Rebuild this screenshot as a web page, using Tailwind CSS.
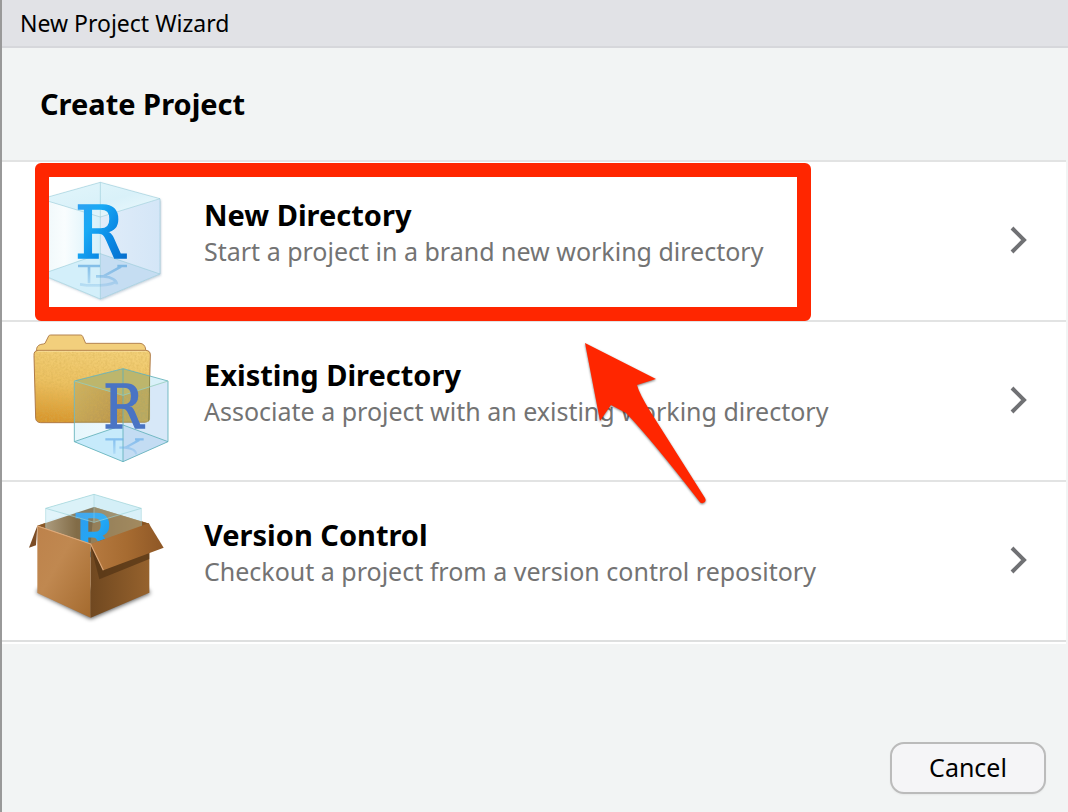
<!DOCTYPE html>
<html lang="en">
<head>
    <meta charset="UTF-8">
    <meta name="viewport" content="width=device-width, initial-scale=1.0">
    <title>New Project Wizard</title>
    <script src="https://cdn.jsdelivr.net/npm/@tailwindcss/browser@4"></script>
</head>
<body class="bg-[#f2f4f4] font-['Lucida_Grande','Noto_Sans',sans-serif] text-black">
    <div class="min-h-screen flex flex-col border-l-2 border-[#999999]">
        <!-- Title bar -->
        <header class="h-12 flex items-center px-[18px] bg-[#e1e2e6] border-b-2 border-[#d6d7db] text-[23px]">New Project Wizard</header>

        <h1 class="h-28 flex items-center px-[38px] text-[29px] font-bold">Create Project</h1>

        <!-- Project types -->
        <main class="relative mr-[2px]">
            <button class="w-full h-40 flex items-center gap-[14px] pl-[18px] pr-[38px] bg-white border-t-2 border-[#e2e3e3] text-left">
                <svg class="w-[170px] h-[150px] shrink-0" viewBox="0 33 510 450" aria-hidden="true">
                    <defs>
                        <linearGradient id="cubeLeft" x1="0" x2="1"><stop offset="0" stop-color="#eef7fa"/><stop offset=".4" stop-color="#f9fdfe"/><stop offset="1" stop-color="#d5f0fa"/></linearGradient>
                        <linearGradient id="cubeRight" x1="0" x2="1"><stop offset="0" stop-color="#e0ecf9"/><stop offset="1" stop-color="#d4e6f7"/></linearGradient>
                        <linearGradient id="cubeTop" x1="0" y1="0" x2="1" y2="1"><stop offset="0" stop-color="#e3f6fb"/><stop offset=".55" stop-color="#d9f1f9"/><stop offset="1" stop-color="#effafd"/></linearGradient>
                        <linearGradient id="letter" x1="0" y1="0" x2="1" y2="1"><stop offset="0" stop-color="#3a9cf0"/><stop offset=".35" stop-color="#19aaf5"/><stop offset=".6" stop-color="#0a8be6"/><stop offset="1" stop-color="#0564c4"/></linearGradient>
                        <linearGradient id="mirror" gradientUnits="userSpaceOnUse" x1="0" y1="330" x2="0" y2="398"><stop offset="0" stop-color="#5fa8df" stop-opacity=".7"/><stop offset="1" stop-color="#5fa8df" stop-opacity=".2"/></linearGradient>
                        <filter id="cubeShadow"><feDropShadow dx="3" dy="4" stdDeviation="3" flood-color="#557799" flood-opacity=".35"/></filter>
                    </defs>
                    <path d="M241 82 420 131V357L241 432 63 358V132Z" fill="#e4f1fa" filter="url(#cubeShadow)"/>
                    <path d="M63 132 241 186V432L63 358Z" fill="url(#cubeLeft)"/>
                    <path d="M241 186 420 131V357L241 432Z" fill="url(#cubeRight)"/>
                    <path d="M63 132 241 82 420 131 241 186Z" fill="url(#cubeTop)"/>
                    <path d="M63 358 241 296V432Z" fill="#d3effa"/>
                    <path d="M241 296 420 357 241 432Z" fill="#c5ddf2"/>
                    <path d="M63 132 241 82 420 131 241 186ZM63 132V358L241 432 420 357V131M241 186V432M63 358 241 296 420 357M241 82V186" fill="none" stroke="#8fc6d3" stroke-width="2" stroke-opacity=".8"/>
                    <!-- reflection on the cube floor -->
                    <path d="M174 333H240M292 333H321M207 335V385M303 335 250 364M228 364H250C275 366 290 376 291 388M180 388 200 391H240Q280 389 290 378" fill="none" stroke="url(#mirror)" stroke-width="8"/>
                    <text x="165" y="309" font-family="'DejaVu Serif Condensed', 'DejaVu Serif', serif" font-size="219" fill="url(#letter)" stroke="url(#letter)" stroke-width="5">R</text>
                </svg>
                <span class="flex-1">
                    <span class="block text-[29px] leading-9 font-bold">New Directory</span>
                    <span class="block text-[25px] leading-9 text-[#737373]">Start a project in a brand new working directory</span>
                    <span class="block h-4"></span>
                </span>
                <svg class="w-5 h-7 mb-[2px]" viewBox="0 0 20 28" fill="none" stroke="#707174" stroke-width="4" aria-hidden="true"><path d="M4 2 16 14 4 26"/></svg>
            </button>

            <button class="w-full h-40 flex items-center gap-[14px] pl-[18px] pr-[38px] bg-white border-t-2 border-[#e2e3e3] text-left">
                <svg class="w-[170px] h-[150px] shrink-0" viewBox="0 3 510 450" aria-hidden="true">
                    <defs>
                        <linearGradient id="folder" x1=".6" y1="0" x2=".4" y2="1"><stop offset="0" stop-color="#f3d078"/><stop offset=".5" stop-color="#ecc162"/><stop offset="1" stop-color="#d9982f"/></linearGradient>
                        <linearGradient id="glassLeft" x1="0" x2="1"><stop offset="0" stop-color="#dff4fb"/><stop offset="1" stop-color="#ecf7fd"/></linearGradient>
                        <linearGradient id="glassFolder" x1="0" x2="1" y2="1"><stop offset="0" stop-color="#cfb968"/><stop offset="1" stop-color="#b8924a"/></linearGradient>
                        <linearGradient id="mirrorSmall" gradientUnits="userSpaceOnUse" x1="0" y1="340" x2="0" y2="392"><stop offset="0" stop-color="#6cb0ea" stop-opacity=".75"/><stop offset="1" stop-color="#6cb0ea" stop-opacity=".2"/></linearGradient>
                        <filter id="grain" x="0" y="0" width="1" height="1">
                            <feTurbulence type="fractalNoise" baseFrequency=".16" numOctaves="2" seed="4"/>
                            <feColorMatrix values="0 0 0 0 .65  0 0 0 0 .42  0 0 0 0 .08  .9 0 0 0 -.32"/>
                            <feComposite in2="SourceGraphic" operator="in" result="dots"/>
                            <feMerge><feMergeNode in="SourceGraphic"/><feMergeNode in="dots"/></feMerge>
                        </filter>
                        <clipPath id="behindGlass"><path d="M163 168 309 131 391 153V280Q389 292 374 293H163Z"/></clipPath>
                    </defs>
                    <path d="M50 80V70Q53 58 70 57L75 55 86 33Q87 30 92 30H182Q186 30 188 34L197 55H360Q374 56 377 72V82Z" fill="#f2cf7c" stroke="#b48451" stroke-width="3"/>
                    <path d="M54 76H376Q391 76 391 90L386 280Q385 293 372 293H62Q48 292 47 280L42 92Q41 77 54 76Z" fill="url(#folder)" filter="url(#grain)"/>
                    <path d="M54 76H376Q391 76 391 90L386 280Q385 293 372 293H62Q48 292 47 280L42 92Q41 77 54 76Z" fill="none" stroke="#b07b48" stroke-width="3"/>
                    <path d="M52 79H380" stroke="#fbe6ab" stroke-width="2"/>
                    <path d="M163 168 309 211V410L163 350Z" fill="url(#glassLeft)" fill-opacity=".8"/>
                    <path d="M309 211 444 168V350L309 410Z" fill="#d7e8f8"/>
                    <path d="M163 168 309 131 444 168 309 211Z" fill="#d9f1f9"/>
                    <g clip-path="url(#behindGlass)">
                        <path d="M163 168 309 131V293H163Z" fill="url(#glassFolder)" filter="url(#grain)"/>
                        <path d="M309 131 391 153V293H309Z" fill="#b5a964" filter="url(#grain)"/>
                        <path d="M163 168 309 131 391 153V186L309 211Z" fill="#bdb66c"/>
                        <path d="M386 293 391 90" stroke="#8b8449" stroke-width="3"/>
                        <path d="M163 292H386" stroke="#96763a" stroke-width="3"/>
                    </g>
                    <path d="M163 350 309 300V410Z" fill="#c6eafb"/>
                    <path d="M309 300 444 350 309 410Z" fill="#c3dcf3"/>
                    <path d="M163 168 309 131 444 168M163 168V350L309 410 444 350V168M309 131V410M163 350 309 300 444 350" fill="none" stroke="#5fb0b8" stroke-width="2.5"/>
                    <path d="M163 168 309 211 444 168" fill="none" stroke="#94ccbd" stroke-width="2.5"/>
                    <path d="M256 343H310M345 343H371M283 345V386M358 345 316 368M298 368H315C336 370 348 376 349 388" fill="none" stroke="url(#mirrorSmall)" stroke-width="7"/>
                    <text x="250" y="310" font-family="'DejaVu Serif Condensed', 'DejaVu Serif', serif" font-size="177" fill="#4a74c4" stroke="#4a74c4" stroke-width="4">R</text>
                </svg>
                <span class="flex-1">
                    <span class="block text-[29px] leading-9 font-bold">Existing Directory</span>
                    <span class="block text-[25px] leading-9 text-[#737373]">Associate a project with an existing working directory</span>
                    <span class="block h-4"></span>
                </span>
                <svg class="w-5 h-7 mb-[2px]" viewBox="0 0 20 28" fill="none" stroke="#707174" stroke-width="4" aria-hidden="true"><path d="M4 2 16 14 4 26"/></svg>
            </button>

            <button class="w-full h-40 flex items-center gap-[14px] pl-[18px] pr-[38px] bg-white border-t-2 border-[#e2e3e3] text-left">
                <svg class="w-[170px] h-[150px] shrink-0" viewBox="0 3 510 450" aria-hidden="true">
                    <defs>
                        <linearGradient id="boxLeft" x1="0" y1="0" x2="1" y2="1"><stop offset="0" stop-color="#bd824b"/><stop offset=".4" stop-color="#c08850"/><stop offset="1" stop-color="#a46a2e"/></linearGradient>
                        <linearGradient id="boxRight" x1="0" x2="1"><stop offset="0" stop-color="#704820"/><stop offset="1" stop-color="#96622d"/></linearGradient>
                        <linearGradient id="flap" x1="0" x2="1"><stop offset="0" stop-color="#b67a40"/><stop offset=".5" stop-color="#a66b31"/><stop offset="1" stop-color="#8e5726"/></linearGradient>
                        <linearGradient id="inside" x1="0" x2="1"><stop offset="0" stop-color="#b7a88c"/><stop offset=".35" stop-color="#826c47"/><stop offset=".5" stop-color="#7d6c4d"/><stop offset="1" stop-color="#a78b5c"/></linearGradient>
                        <linearGradient id="blueR" x1="0" y1="0" x2="1" y2="1"><stop offset="0" stop-color="#3698e8"/><stop offset=".5" stop-color="#22a7f6"/><stop offset="1" stop-color="#1688e0"/></linearGradient>
                        <filter id="soft"><feGaussianBlur stdDeviation="7"/></filter>
                    </defs>
                    <path d="M48 322 212 402 392 325 380 310 60 310Z" fill="#000000" fill-opacity=".65" filter="url(#soft)"/>
                    <path d="M77 70 222 28 364 70V128L212 175 77 130Z" fill="#d9f0f8"/>
                    <path d="M77 70 222 28V66L77 108Z" fill="#e1f4fa"/>
                    <path d="M52 122 222 66 388 116 212 177Z" fill="url(#inside)"/>
                    <path d="M222 66 388 116 212 177Z" fill="#a38c63" fill-opacity=".6"/>
                    <path d="M52 122 77 113V130Z" fill="#8b5928"/>
                    <path d="M364 109 388 116 364 125Z" fill="#895523"/>
                    <text x="162" y="213" font-family="'DejaVu Serif Condensed', 'DejaVu Serif', serif" font-size="175" fill="url(#blueR)" stroke="url(#blueR)" stroke-width="8">R</text>
                    <path d="M77 70 222 28 364 70 222 112Z" fill="#bfe8ef" fill-opacity=".15" stroke="#9bd1d6" stroke-width="2.5" stroke-opacity=".8"/>
                    <path d="M77 70V128M364 70V125M222 28V112" fill="none" stroke="#9bd1d6" stroke-width="2" stroke-opacity=".7"/>
                    <path d="M52 122 27 188 48 181Z" fill="#7c4d26"/>
                    <path d="M52 122 212 177V398L52 324Z" fill="url(#boxLeft)"/>
                    <path d="M212 177 388 116V323L212 398Z" fill="url(#boxRight)"/>
                    <path d="M212 180 238 283 388 222V190Z" fill="#563515" fill-opacity=".75"/>
                    <path d="M212 177 386 115 431 188 250 256Z" fill="url(#flap)"/>
                    <path d="M52 123 212 177 250 256" fill="none" stroke="#dda878" stroke-width="3.5"/>
                </svg>
                <span class="flex-1">
                    <span class="block text-[29px] leading-9 font-bold">Version Control</span>
                    <span class="block text-[25px] leading-9 text-[#737373]">Checkout a project from a version control repository</span>
                    <span class="block h-4"></span>
                </span>
                <svg class="w-5 h-7 mb-[2px]" viewBox="0 0 20 28" fill="none" stroke="#707174" stroke-width="4" aria-hidden="true"><path d="M4 2 16 14 4 26"/></svg>
            </button>
            <div class="h-1 border-t-2 border-[#dedfdf] bg-white"></div>

            <!-- Highlight box and arrow over the list -->
            <div class="absolute left-[33px] top-[3px] w-[776px] h-[158px] border-14 border-[#ff2600] rounded-md pointer-events-none"></div>
            <svg class="absolute left-[573px] top-[175px] w-[145px] h-[180px] pointer-events-none drop-shadow-[0_1px_1px_#00000080]" viewBox="0 0 145 180" aria-hidden="true">
                <path d="M10 8 81 44 62 50Q64 58 75 76L130 163Q132 167 128 168 126 169 124 166 76 104 51 78L36 70 25 86Z" fill="#ff2600"/>
            </svg>
        </main>

        <!-- Actions -->
        <footer class="mt-auto flex justify-end pr-[22px] pb-[18px]">
            <button class="h-[52px] w-[156px] border-2 border-[#bbbbbb] rounded-[14px] bg-[#f5f5f7] text-[25px] shadow-xs">Cancel</button>
        </footer>
    </div>
</body>
</html>
